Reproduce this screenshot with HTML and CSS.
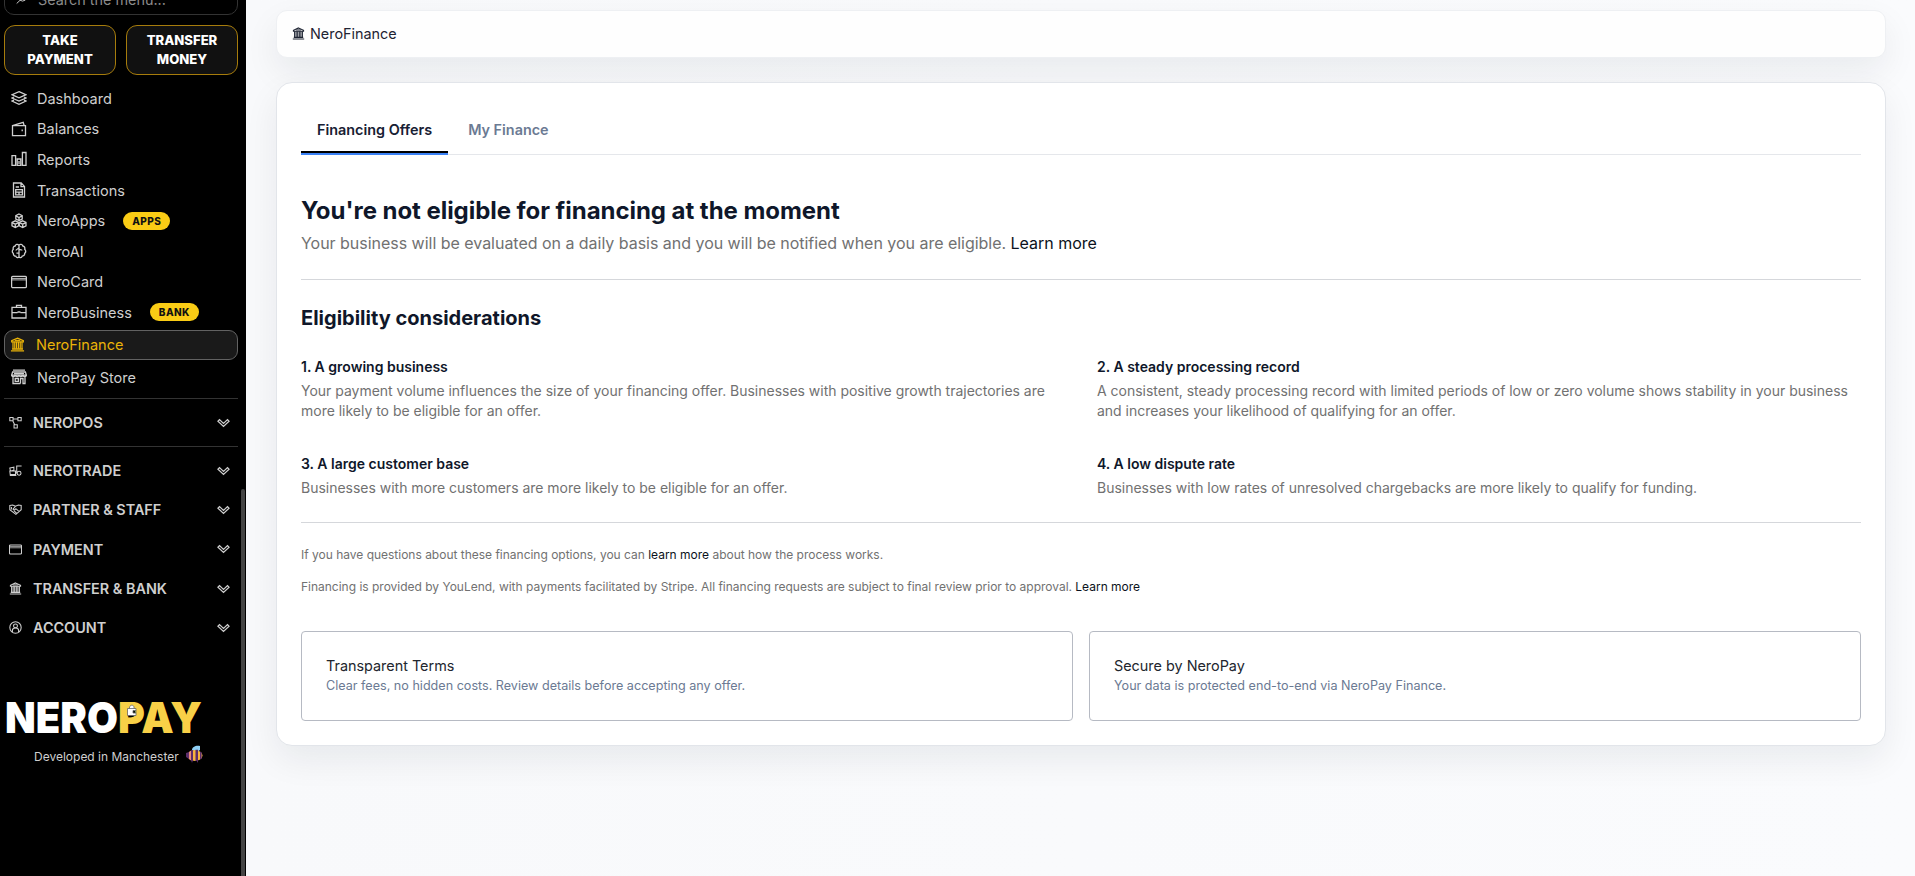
FILE: index.html
```
<!DOCTYPE html>
<html lang="en">
<head>
    <meta charset="UTF-8">
    <meta name="viewport" content="width=device-width, initial-scale=1.0">
    <title>NeroFinance</title>
    <link rel="stylesheet" href="styles.css">
</head>
<body>
    <svg class="sprite" aria-hidden="true">
        <symbol id="i-bank" viewBox="0 0 16 16">
            <path d="M8 1.2 14.2 4V5.2H1.8V4ZM2.2 12.8H13.8M1 14.8H15" stroke-width="1.4"/>
            <path d="M5 3.6H11" stroke-width="1.2"/>
            <path d="M3.2 5.2V12.6M5.1 5.2V12.6M7 5.2V12.6M9 5.2V12.6M10.9 5.2V12.6M12.8 5.2V12.6" stroke-width="1.3"/>
        </symbol>
        <symbol id="i-card" viewBox="0 0 16 16">
            <rect x=".6" y="2.4" width="14.8" height="11.2" rx="1.2"/>
            <path d="M.6 4.4H15.4M.6 5.9H15.4" stroke-width=".9"/>
        </symbol>
        <symbol id="i-chevron" viewBox="0 0 14 10">
            <path d="M1 3 2.7 1.3 7 5.4 11.3 1.3 13 3 7 8.8Z"/>
        </symbol>
    </svg>

    <aside class="sidebar">
        <div class="search">
            <svg class="search-icon" viewBox="0 0 16 16"><circle cx="9.5" cy="6" r="5"/><path d="M6 9.8 1 14.5"/></svg>
            <span>Search the menu...</span>
        </div>
        <div class="quick-actions">
            <button class="quick-btn">TAKE PAYMENT</button>
            <button class="quick-btn">TRANSFER MONEY</button>
        </div>

        <nav class="menu">
            <a class="menu-item"><svg class="icon" viewBox="0 0 16 16"><path d="M8 1.6 15 4.7 8 7.8 1 4.7ZM3 7 1 8 8 11.1 15 8 13 7M3 10.2 1 11.1 8 14.3 15 11.1 13 10.2"/></svg>Dashboard</a>
            <a class="menu-item"><svg class="icon" viewBox="0 0 16 16"><path d="M1.5 4.7H14.5V14.6H1.5ZM1.5 4.7 12.2 1.3 13.2 4.7M11.2 8.6V10.2"/></svg>Balances</a>
            <a class="menu-item"><svg class="icon" viewBox="0 0 16 16"><path d="M1 4.6H4.6V14.4H1ZM6.2 8H9.8V14.4H6.2ZM11.4 1.5H15V14.4H11.4ZM8 10V13"/></svg>Reports</a>
            <a class="menu-item"><svg class="icon" viewBox="0 0 16 16"><path d="M2.5 1H10.2L13.5 4.4V15H2.5ZM10 1V4.6H13.5M4.7 5H8M4.7 7.7H11.4V12.8H4.7ZM4.7 10.2H11.4M8 10.2V12.8"/></svg>Transactions</a>
            <a class="menu-item"><svg class="icon" viewBox="0 0 16 16"><path d="M8 1 11.2 2.6V6L8 7.6 4.8 6V2.6ZM4.3 7.8 7.7 9.4V12.9L4.3 14.5 1 12.9V9.4ZM11.7 7.8 15 9.4V12.9L11.7 14.5 8.3 12.9V9.4ZM4.8 2.9 8 4.5 11.2 2.9M8 4.5V7.4M1 9.7 4.3 11.2 7.7 9.7M4.3 11.2V14.4M8.3 9.7 11.7 11.2 15 9.7M11.7 11.2V14.4"/></svg>NeroApps<span class="badge">APPS</span></a>
            <a class="menu-item"><svg class="icon" viewBox="0 0 16 16"><path d="M7.9 2.2C6.6.8 4.6 1.4 4.2 3 2.3 3.4 1.8 5 2.3 6.2.9 7.5 1 9.5 2.3 10.3 2.2 12.2 3.5 13.2 4.8 13.2 5.6 14.9 7.3 15 8 13.8 8.8 15 10.5 14.8 11.2 13.2 12.8 13 13.8 12 13.7 10.3 15.1 9.3 15 7.4 13.7 6.2 14.2 4.8 13.4 3.3 11.8 3 11.4 1.4 9.3.8 7.9 2.2ZM8 2V14M5 7.4C5 6 8 6 8 4.6M8 6C8 7 11 6 11 7.6M5.4 10.2H8"/></svg>NeroAI</a>
            <a class="menu-item"><svg class="icon"><use href="#i-card"/></svg>NeroCard</a>
            <a class="menu-item"><svg class="icon" viewBox="0 0 16 16"><path d="M1 3.4H15V14H1ZM5.5 3.4V1.4H10.5V3.4M1 8.6H6.5M9.5 8.6H15M6.5 8H9.5"/></svg>NeroBusiness<span class="badge">BANK</span></a>
            <a class="menu-item active"><svg class="icon"><use href="#i-bank"/></svg>NeroFinance</a>
            <a class="menu-item"><svg class="icon" viewBox="0 0 16 16"><path d="M2 1.2H14M1.6 3H14.4L15.4 6.2H.6ZM.6 6.2C1 8.2 4 8.2 4.3 6.2 4.6 8.2 7.7 8.2 8 6.2 8.3 8.2 11.4 8.2 11.7 6.2 12 8.2 15 8.2 15.4 6.2M2 8V14.5H9.5M9.5 14.5V9.5H12V14.5H14V8M4.2 9.5H7.4V12.3H4.2ZM3 4.6H13"/></svg>NeroPay Store</a>
        </nav>

        <div class="group ruled"><svg class="group-icon" viewBox="0 0 16 16"><path d="M1 1.8H5V5.8H1ZM11 1.8H15V5.8H11ZM6.2 10.8H10.2V14.8H6.2ZM5 3.8H11M4.6 5.8 7 10.8"/></svg>NEROPOS<svg class="chevron"><use href="#i-chevron"/></svg></div>
        <div class="group ruled"><svg class="group-icon" viewBox="0 0 16 16"><path d="M15.5 2.4H9.5V10.5M1 5 6 4V7.8L1.8 8.5ZM1 8.7H8V13H1.5ZM8 11H10M1 14H9"/><circle cx="12.4" cy="11.4" r="2.4"/></svg>NEROTRADE<svg class="chevron"><use href="#i-chevron"/></svg></div>
        <div class="group"><svg class="group-icon" viewBox="0 0 16 16"><path d="M1 3 4.5 2.5 8 4 11.5 2.5 15 3V8.2L8.5 14 1 8.3ZM8 4 5 7.5C6 9 7.5 8.5 8.5 7L12.5 10.5M6 9.5 9.5 12.8M3 5V8"/></svg>PARTNER &amp; STAFF<svg class="chevron"><use href="#i-chevron"/></svg></div>
        <div class="group"><svg class="group-icon"><use href="#i-card"/></svg>PAYMENT<svg class="chevron"><use href="#i-chevron"/></svg></div>
        <div class="group"><svg class="group-icon"><use href="#i-bank"/></svg>TRANSFER &amp; BANK<svg class="chevron"><use href="#i-chevron"/></svg></div>
        <div class="group"><svg class="group-icon" viewBox="0 0 16 16"><circle cx="8" cy="8" r="7"/><circle cx="8" cy="6" r="2.4"/><path d="M4.2 13.4V11.5C4.2 9.6 5.8 8.6 8 8.6S11.8 9.6 11.8 11.5V13.4"/></svg>ACCOUNT<svg class="chevron"><use href="#i-chevron"/></svg></div>

        <div class="brand">
            <svg class="logo" viewBox="0 0 196 34">
                <text x="-2" y="33" textLength="113" lengthAdjust="spacingAndGlyphs" class="logo-nero">NERO</text>
                <text x="111" y="33" textLength="84" lengthAdjust="spacingAndGlyphs" class="logo-pay">PAY</text>
                <path class="logo-bag" d="M120.5 8.5H129V15.5H120.5ZM122.5 8.5V7C123.5 4.6 126.5 4.6 127 7V8.5M129 10.5H126V13H129"/>
            </svg>
            <div class="tagline">Developed in Manchester
                <svg class="bee" viewBox="0 0 18 18">
                    <path d="M6 5C6 2 10 0 14 1V5L11 7Z" fill="#8fd0f5"/>
                    <ellipse cx="9" cy="10.5" rx="7.5" ry="5.4" fill="#f7b43c"/>
                    <path d="M0 8 3 7V14L0 12ZM5 5.3H7V16H5ZM9.5 4.8H12V16H9.5ZM14 7H15.6V14H14ZM5 15H7L6 18ZM10 15H12V18Z" fill="#5d2e6b"/>
                    <path d="M3 7 5 5.5V15.4L3 14Z" fill="#e88a79"/>
                </svg>
            </div>
        </div>
        <div class="scroll-thumb"></div>
    </aside>

    <main class="content">
        <header class="page-head">
            <svg class="head-icon"><use href="#i-bank"/></svg>NeroFinance
        </header>

        <section class="card">
            <div class="tabs">
                <a class="tab selected">Financing Offers</a>
                <a class="tab">My Finance</a>
            </div>

            <h1>You're not eligible for financing at the moment</h1>
            <p class="lead">Your business will be evaluated on a daily basis and you will be notified when you are eligible. <a>Learn more</a></p>
            <hr>

            <h2>Eligibility considerations</h2>
            <div class="reasons">
                <div>
                    <h3>1. A growing business</h3>
                    <p>Your payment volume influences the size of your financing offer. Businesses with positive growth trajectories are more likely to be eligible for an offer.</p>
                </div>
                <div>
                    <h3>2. A steady processing record</h3>
                    <p>A consistent, steady processing record with limited periods of low or zero volume shows stability in your business and increases your likelihood of qualifying for an offer.</p>
                </div>
                <div>
                    <h3>3. A large customer base</h3>
                    <p>Businesses with more customers are more likely to be eligible for an offer.</p>
                </div>
                <div>
                    <h3>4. A low dispute rate</h3>
                    <p>Businesses with low rates of unresolved chargebacks are more likely to qualify for funding.</p>
                </div>
            </div>
            <hr>

            <p class="note">If you have questions about these financing options, you can <a>learn more</a> about how the process works.</p>
            <p class="note">Financing is provided by YouLend, with payments facilitated by Stripe. All financing requests are subject to final review prior to approval. <a>Learn more</a></p>

            <div class="assurances">
                <div class="assurance">
                    <h4>Transparent Terms</h4>
                    <p>Clear fees, no hidden costs. Review details before accepting any offer.</p>
                </div>
                <div class="assurance">
                    <h4>Secure by NeroPay</h4>
                    <p>Your data is protected end-to-end via NeroPay Finance.</p>
                </div>
            </div>
        </section>
    </main>
</body>
</html>
```
FILE: styles.css
```
* { box-sizing: border-box; }
body { margin: 0; display: flex; height: 876px; overflow: hidden; font-family: Inter, "Liberation Sans", sans-serif; background: #f9fafc; color: #0f172a; }
h1, h2, h3, h4, p { margin: 0; }
svg { fill: none; stroke: currentColor; stroke-width: 1.3; flex: none; }
.sprite { position: absolute; width: 0; height: 0; }

/* sidebar */
.sidebar { position: relative; flex: none; width: 246px; height: 876px; padding: 0 8px 0 4px; overflow: hidden; background: #000; color: #cfcfcf; }
.search { display: flex; align-items: center; gap: 11px; height: 32px; margin-top: -17px; padding-left: 11px; border: 1px solid #333; border-radius: 10px; color: #8b8b8b; font-size: 14.4px; }
.search-icon { width: 11px; height: 14px; color: #ddd; }
.quick-actions { display: grid; grid-template-columns: 1fr 1fr; gap: 10px; margin: 10px 0 8px; }
.quick-btn { height: 50px; padding: 0 12px; border: 1px solid #a67c0c; border-radius: 11px; background: #111; color: #fff; font: 800 13.1px/19px Inter, sans-serif; }
.menu { padding-bottom: 6px; }
.menu-item { display: flex; align-items: center; height: 30.6px; padding-left: 7px; font-size: 14.5px; }
.icon { width: 16px; height: 16px; margin-right: 10px; }
.badge { height: 18px; margin-left: 18px; padding: 0 9px; border-radius: 9px; background: #facc15; color: #111; font-size: 10px; font-weight: 800; line-height: 18px; letter-spacing: .4px; }
.menu-item.active { height: 30px; margin: 2px 0; padding-left: 5px; border: 1px solid #626262; border-radius: 9px; background: #1a1a1a; color: #eab308; }
.active .icon { width: 15px; height: 15px; margin-right: 11px; }
.group { display: flex; align-items: center; height: 39.3px; padding: 0 8px 0 5px; font-size: 14.4px; font-weight: 600; }
.group.ruled { height: 48px; border-top: 1px solid #333; }
.group.ruled + .group:not(.ruled) { margin-top: -4px; }
.group-icon { width: 13px; height: 13px; margin-right: 11px; }
.chevron { width: 13px; height: 10px; margin-left: auto; }
.brand { padding: 52px 0 0 3px; }
.logo { display: block; width: 196px; height: 34px; overflow: visible; }
.logo text { font-family: Inter, sans-serif; font-size: 43px; font-weight: 900; stroke: none; }
.logo-nero { fill: #fff; }
.logo-pay { fill: #f8d047; }
.logo-bag { fill: #fff; stroke: #666; stroke-width: .8; }
.tagline { display: flex; align-items: center; gap: 7px; margin: 15px 0 0 27px; font-size: 12px; }
.bee { width: 18px; height: 18px; margin-top: -4px; stroke: none; }
.scroll-thumb { position: absolute; right: 1px; top: 489px; width: 4px; height: 400px; border-radius: 2px; background: #444; }

/* main content */
.content { flex: 1; padding: 10px 29px 0 30px; background: linear-gradient(90deg, #f8f9fb, #fafbfd); }
.page-head { display: flex; align-items: center; gap: 5px; height: 48px; padding: 0 15px 1px; border: 1px solid #eef0f3; border-radius: 11px; background: #fefefe; box-shadow: 0 14px 34px rgba(15, 23, 42, .07); font-size: 14.4px; color: #1e2433; }
.head-icon { width: 13px; height: 13px; }
.card { position: relative; height: 664px; margin-top: 24px; padding: 28px 24px 0; border: 1px solid #e2e5ea; border-radius: 16px; background: #fff; box-shadow: 0 14px 34px rgba(15, 23, 42, .07); }
.tabs { display: flex; height: 44px; border-bottom: 1px solid #e5e7eb; }
.tab { height: 44px; padding: 10px 16px; color: #6b7a93; font-size: 14.4px; font-weight: 600; line-height: 18px; }
.tab + .tab { margin-left: 4px; }
.tab.selected { border-bottom: 2px solid #3b82f6; box-shadow: inset 0 -2px #000; color: #172033; }
h1 { margin-top: 40px; font-size: 24px; line-height: 32px; font-weight: 700; letter-spacing: -.05px; }
.lead { margin-top: 4px; color: #717171; font-size: 16px; line-height: 24px; letter-spacing: -.025px; }
.card a:not(.tab) { color: #0b1220; }
hr { height: 1px; margin: 24px 0 0; border: 0; background: #d5d7db; }
h2 { margin-top: 24px; font-size: 20px; line-height: 28px; font-weight: 700; }
.reasons { display: grid; grid-template-columns: 1fr 1fr; gap: 33px 32px; margin-top: 25px; color: #717171; font-size: 14px; line-height: 20px; letter-spacing: -.015px; }
h3 { margin-bottom: 4px; color: #0f172a; font-size: 14px; line-height: 20px; font-weight: 600; letter-spacing: 0; }
.note { margin-top: 24px; color: #717171; font-size: 12px; line-height: 16px; letter-spacing: -.01px; }
.note + .note { margin-top: 16px; }
.assurances { display: grid; grid-template-columns: 1fr 1fr; gap: 16px; margin-top: 36px; }
.assurance { height: 90px; padding: 24px; border: 1px solid #b6bac3; border-radius: 4px; }
h4 { color: #22262e; font-size: 14.4px; line-height: 20px; font-weight: 400; }
.assurance p { color: #6b7a93; font-size: 12.6px; line-height: 20px; }
```
